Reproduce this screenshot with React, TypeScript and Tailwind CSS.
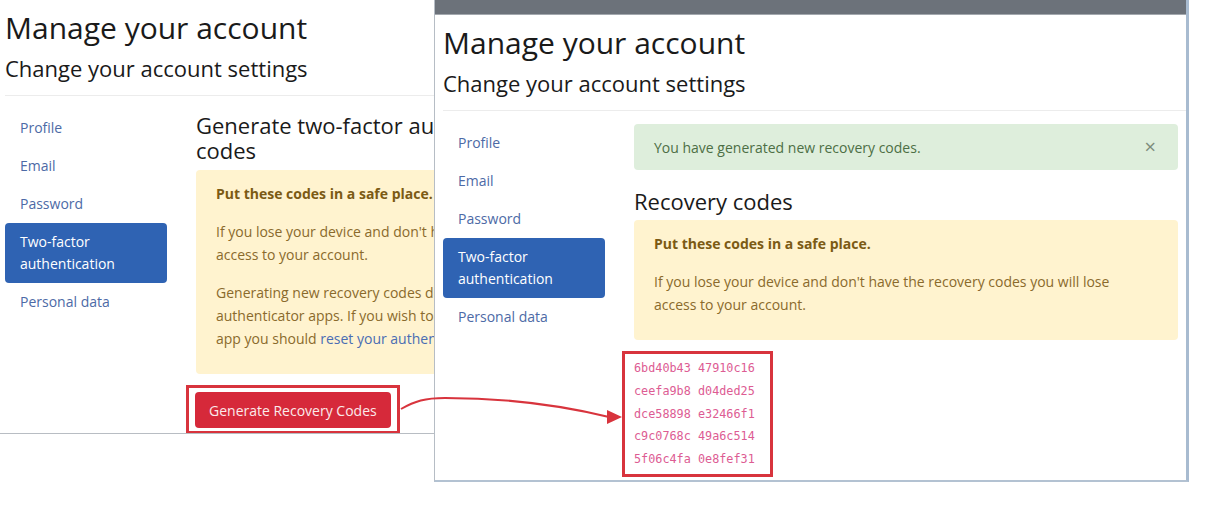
import type { ReactNode } from 'react';

const sans = { fontFamily: '"Open Sans", "Noto Sans", sans-serif' };

function Nav() {
  return (
    <ul className="w-[162px] shrink-0 text-[14px] leading-[22px]">
      <li className="px-[15px] py-[8px] text-[#4d6aa6]">Profile</li>
      <li className="px-[15px] py-[8px] text-[#4d6aa6]">Email</li>
      <li className="px-[15px] py-[8px] text-[#4d6aa6]">Password</li>
      <li className="rounded-[4px] bg-[#2f63b3] px-[15px] py-[8px] text-white">
        Two-factor
        <br />
        authentication
      </li>
      <li className="px-[15px] py-[8px] text-[#4d6aa6]">Personal data</li>
    </ul>
  );
}

function AccountPage({ pad, children }: { pad: string; children: ReactNode }) {
  return (
    <div className={pad}>
      <h1 className="pt-[10px] text-[30px] leading-[36px] text-[#1a1a1a]">Manage your account</h1>
      <h2 className="mt-[7px] text-[22px] leading-[30px] text-[#1a1a1a]">Change your account settings</h2>
      <hr className="mt-[12px] border-[#ececec]" />
      <div className="mt-[13px] flex">
        <Nav />
        <div className="ml-[29px] w-[544px] shrink-0">{children}</div>
      </div>
    </div>
  );
}

function SafePlace({ children }: { children?: ReactNode }) {
  return (
    <div className="rounded-[4px] bg-[#fff3cf] px-[20px] pb-[24px] pt-[12px] text-[14px] leading-[23px] text-[#8a6a2c]">
      <p className="mb-[14px] font-bold leading-[24px] text-[#7b5a14]">Put these codes in a safe place.</p>
      <p>
        If you lose your device and don't have the recovery codes you will lose
        <br />
        access to your account.
      </p>
      {children}
    </div>
  );
}

const codes = ['6bd40b43 47910c16', 'ceefa9b8 d04ded25', 'dce58898 e32466f1', 'c9c0768c 49a6c514', '5f06c4fa 0e8fef31'];

export default function App() {
  return (
    <div className="relative h-[509px] w-[1224px] overflow-hidden bg-white" style={sans}>
      {/* window behind: generate codes */}
      <div className="absolute left-0 top-0 h-[434px] w-[436px] overflow-hidden border-b border-[#b8bdc3] bg-white">
        <AccountPage pad="pl-[5px]">
          <h3 className="mt-[4px] text-[22px] leading-[25px] text-[#1a1a1a]">
            Generate two-factor authentication (2FA) recovery
            <br />
            codes
          </h3>
          <div className="mt-[7px]">
            <SafePlace>
              <p className="mt-[15px]">
                Generating new recovery codes does not change the keys used in
                <br />
                authenticator apps. If you wish to change the key used in an authenticator
                <br />
                app you should <span className="text-[#4a6db3]">reset your authenticator keys.</span>
              </p>
            </SafePlace>
          </div>
          <div className="-ml-[10px] mt-[11px] w-fit border-[3px] border-[#d8343d] px-[6px] pb-[3px] pt-[4px]">
            <button className="h-[36px] rounded-[4px] bg-[#d6293a] px-[14px] text-[14px] text-[#fbeaea]">
              Generate Recovery Codes
            </button>
          </div>
        </AccountPage>
      </div>

      {/* window in front: recovery codes */}
      <div className="absolute left-[434px] top-0 h-[482px] w-[755px] overflow-hidden border-b-2 border-l border-r-[3px] border-b-[#b3c2d2] border-l-[#b6bdc5] border-r-[#a8bbd0] bg-white">
        <div className="h-[15px] border-b border-[#a3a8ae] bg-[#6c727a]" />
        <AccountPage pad="pl-[8px]">
          <div className="flex h-[46px] items-center justify-between rounded-[4px] bg-[#deeedc] pl-[20px] pr-[22px] text-[14px] text-[#4d6e45]">
            <span>You have generated new recovery codes.</span>
            <span className="text-[20px] leading-none text-[#7d8c7b]">×</span>
          </div>
          <h3 className="mb-[6px] mt-[18px] text-[22px] leading-[26px] text-[#1a1a1a]">Recovery codes</h3>
          <SafePlace />
          <div
            className="-ml-[12px] mt-[11px] w-[151px] border-[3px] border-[#d8343d] pb-[3px] pl-[9px] pt-[3px] text-[11.8px] leading-[22.75px] text-[#dd5c93]"
            style={{ fontFamily: '"DejaVu Sans Mono", "Liberation Mono", monospace' }}
          >
            {codes.map((c) => (
              <div key={c}>{c}</div>
            ))}
          </div>
        </AccountPage>
      </div>

      {/* annotation arrow */}
      <svg className="pointer-events-none absolute left-0 top-0" width="1224" height="509" viewBox="0 0 1224 509">
        <path d="M401 409 C415 401 425 398 445 398 C500 398 560 405 609 417" fill="none" stroke="#d8343d" strokeWidth="2" />
        <polygon points="607,410 622,417 607,424" fill="#d8343d" />
      </svg>
    </div>
  );
}
